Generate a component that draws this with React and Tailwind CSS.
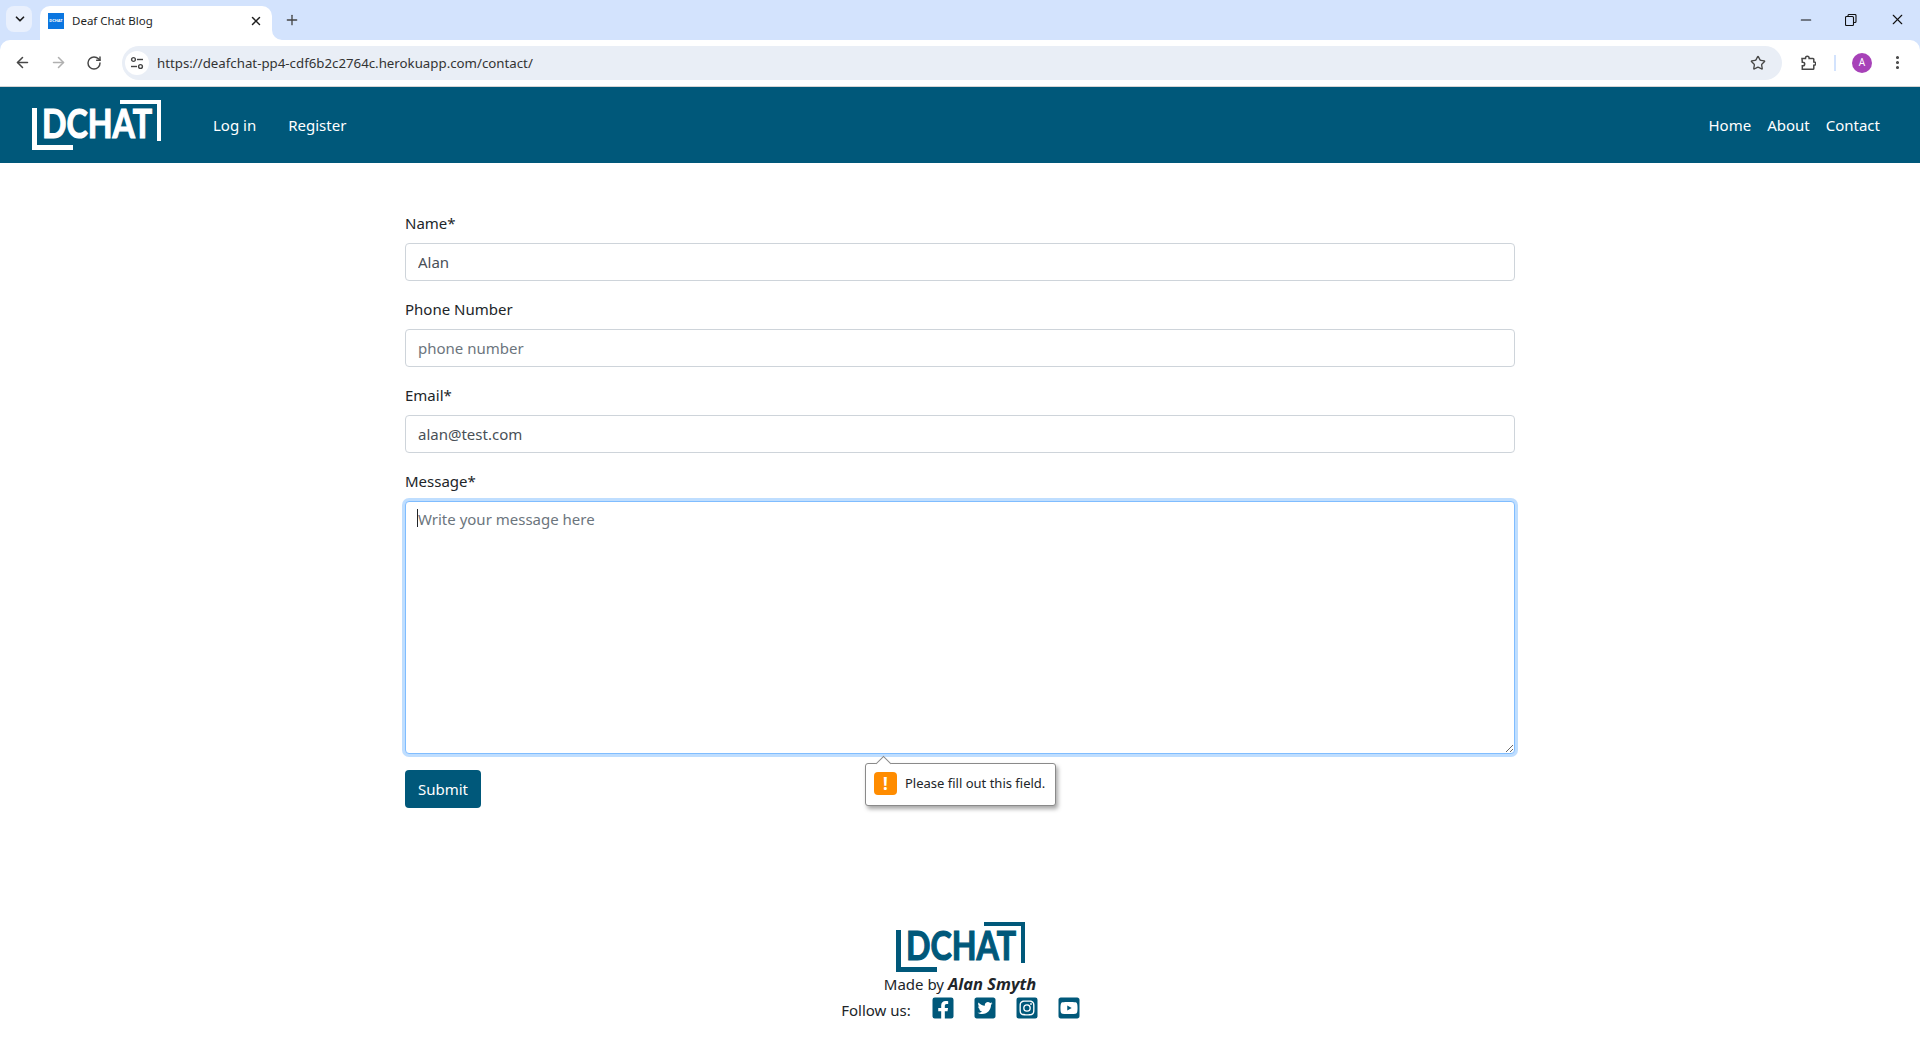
import { ArrowLeft, ArrowRight, ChevronDown, EllipsisVertical, Minus, Plus, RotateCw, Star, X } from 'lucide-react';
import { FaFacebookSquare, FaInstagramSquare, FaTwitterSquare, FaYoutubeSquare } from 'react-icons/fa';

const Logo = ({ className }) => (
  <svg width="129" height="50" viewBox="0 0 129 50" className={`overflow-visible ${className || ''}`} fill="currentColor">
    <rect x="0" y="8" width="5" height="42" />
    <rect x="0" y="45" width="41" height="5" />
    <rect x="88" y="0" width="41" height="4" />
    <rect x="125" y="0" width="4" height="41" />
    <text
      x="10"
      y="38"
      textLength="110"
      lengthAdjust="spacingAndGlyphs"
      stroke="currentColor"
      strokeWidth="1.2"
      style={{ fontFamily: 'Lato, sans-serif', fontWeight: 700, fontSize: '40px' }}
    >
      DCHAT
    </text>
  </svg>
);

const Field = ({ label, placeholder, value }) => (
  <div className="mb-4">
    <label className="block mb-2 h-6 leading-6 text-[15px]">{label}</label>
    <input
      type="text"
      readOnly
      value={value}
      placeholder={placeholder}
      className="block w-full h-[38px] px-3 border border-[#ced4da] rounded bg-white text-[15px] text-[#495057] placeholder:text-[#6c757d] outline-none"
    />
  </div>
);

const BrowserBar = () => (
  <div className="bg-[#d3e3fd] text-[#1f1f1f]">
    {/* tab strip */}
    <div className="h-10 flex items-end">
      <div className="w-[26px] h-[26px] ml-1.5 mb-2 rounded-lg bg-[#e9f0fd] flex items-center justify-center">
        <ChevronDown size={14} strokeWidth={3} className="ml-px" />
      </div>
      <div className="relative w-[232px] h-[34px] ml-2 bg-white rounded-t-[10px] flex items-center pl-2 pr-[9px]">
        <div className="w-4 h-4 -mt-1 bg-[#0b76e0] flex items-center justify-center text-[4px] leading-none font-bold text-white overflow-hidden">DCHAT</div>
        <span className="ml-2 -mt-1 text-[11.5px] font-['Noto_Sans',sans-serif]">Deaf Chat Blog</span>
        <X size={14} strokeWidth={2.5} className="ml-auto -mt-1" />
        <svg width="10" height="10" className="absolute -right-2.5 bottom-0 text-white" fill="currentColor"><path d="M0 0 A10 10 0 0 0 10 10 H0 Z" /></svg>
      </div>
      <Plus size={16} strokeWidth={2} className="ml-3 mb-[12px] text-[#444]" />
      <div className="ml-auto flex items-center mb-[12px] text-[#111]">
        <Minus size={16} strokeWidth={1.8} className="mr-[31px]" />
        <svg width="12" height="12" viewBox="0 0 12 12" fill="none" stroke="currentColor" strokeWidth="1.1" className="mr-[32px]">
          <rect x="0.5" y="2.5" width="8" height="9" rx="1" />
          <path d="M3 2.5V1.5a1 1 0 0 1 1-1h6a1 1 0 0 1 1 1v6a1 1 0 0 1-1 1H8.5" />
        </svg>
        <X size={17} strokeWidth={1.6} className="mr-[14px]" />
      </div>
    </div>
    {/* toolbar */}
    <div className="h-[47px] bg-white rounded-t-[10px] border-b border-[#d4d4d4] flex items-center pb-px">
      <ArrowLeft size={17} strokeWidth={2.2} className="ml-[14px] text-[#474747]" />
      <ArrowRight size={17} strokeWidth={2.2} className="ml-[19px] text-[#b0b0b0]" />
      <RotateCw size={16} strokeWidth={2.2} className="ml-[19px] text-[#474747]" />
      <div className="w-[1660px] h-[34px] ml-5 rounded-full bg-[#e9eef6] flex items-center pl-[3px] pr-4">
        <div className="w-6 h-6 rounded-full bg-white flex items-center justify-center">
          <svg width="14" height="14" viewBox="0 0 14 14" fill="none" stroke="#444" strokeWidth="1.4">
            <circle cx="3.5" cy="3.5" r="1.9" />
            <path d="M7 3.5h6" />
            <circle cx="10.5" cy="10.5" r="1.9" />
            <path d="M1 10.5h6" />
          </svg>
        </div>
        <span className="ml-[8px] pt-[2px] text-[13.27px] text-[#333] font-['Noto_Sans',sans-serif]">https://deafchat-pp4-cdf6b2c2764c.herokuapp.com/contact/</span>
        <Star size={16} strokeWidth={2} className="ml-auto text-[#474747]" />
      </div>
      <svg width="16" height="16" viewBox="0 0 16 16" fill="none" stroke="#474747" strokeWidth="1.5" className="ml-[18px]">
        <path d="M2 3.5h3.5V3a1.8 1.8 0 0 1 3.6 0v.5H13a.8.8 0 0 1 .8.8V7h.3a1.6 1.6 0 0 1 0 3.2h-.3v3.3a.8.8 0 0 1-.8.8H2.3v-3.5h.6a1.8 1.8 0 0 0 0-3.6h-.6z" />
      </svg>
      <div className="w-0.5 h-4 ml-[18px] bg-[#d3e3fd]" />
      <div className="w-5 h-5 ml-[16px] rounded-full bg-[#a742b8] text-white text-[10px] flex items-center justify-center">A</div>
      <EllipsisVertical size={17} strokeWidth={2.4} className="ml-[17px] text-[#474747]" />
    </div>
  </div>
);

const App = () => {
  return (
    <div className="h-screen overflow-hidden flex flex-col bg-white text-[#212529] font-['Noto_Sans',sans-serif]">
      <BrowserBar />

      <nav className="h-[76px] shrink-0 bg-[#00587a] text-white flex items-center text-[15px]">
        <Logo className="ml-8 shrink-0 -mt-px" />
        <a className="ml-[52px]">Log in</a>
        <a className="ml-8">Register</a>
        <div className="ml-auto mr-10 flex gap-4">
          <a>Home</a>
          <a>About</a>
          <a>Contact</a>
        </div>
      </nav>

      <form className="w-[1110px] ml-[405px] mt-12">
        <Field label="Name*" value="Alan" />
        <Field label="Phone Number" placeholder="phone number" value="" />
        <Field label="Email*" value="alan@test.com" />
        <div className="relative mb-4">
          <label className="block mb-2 h-6 leading-6 text-[15px]">Message*</label>
          <textarea
            readOnly
            placeholder="Write your message here"
            className="block w-full h-[253px] px-3 py-1.5 border border-[#80bdff] rounded bg-white text-[15px] placeholder:text-[#6c757d] outline-none shadow-[0_0_0_3px_rgba(0,123,255,0.25)]"
          />
          <div className="absolute left-[12px] top-[40px] w-px h-[18px] bg-[#212529]" />
          {/* validation bubble */}
          <div className="absolute left-[460px] top-[294px] w-[191px] h-[43px] bg-white border border-[#8a8a8a] rounded-[3px] shadow-[2px_3px_4px_rgba(0,0,0,0.35)] flex items-center px-2 text-[13px] whitespace-nowrap">
            <div className="absolute left-[12px] -top-[6px] w-[11px] h-[11px] rotate-45 bg-white border-l border-t border-[#8a8a8a]" />
            <div className="w-[23px] h-[23px] shrink-0 -mt-0.5 rounded-sm bg-[#ff8c00] text-white flex items-center justify-center font-bold text-[17px]">!</div>
            <span className="ml-2 -mt-0.5">Please fill out this field.</span>
          </div>
        </div>
        <button type="button" className="w-[76px] h-[38px] rounded bg-[#00587a] text-white text-[15px]">Submit</button>
      </form>

      <footer className="mt-[114px] flex flex-col items-center">
        <Logo className="text-[#00587a]" />
        <p className="h-6 leading-6 text-[15px]">Made by <b className="italic text-[16.5px]">Alan Smyth</b></p>
        <div className="flex items-center h-[24px] text-[15px] ml-0.5">
          <span className="mr-[20px] pt-1">Follow us:</span>
          <div className="flex gap-[18px] text-[#00587a] text-[24px]">
            <FaFacebookSquare />
            <FaTwitterSquare />
            <FaInstagramSquare />
            <FaYoutubeSquare />
          </div>
        </div>
      </footer>
    </div>
  );
};

export default App;
